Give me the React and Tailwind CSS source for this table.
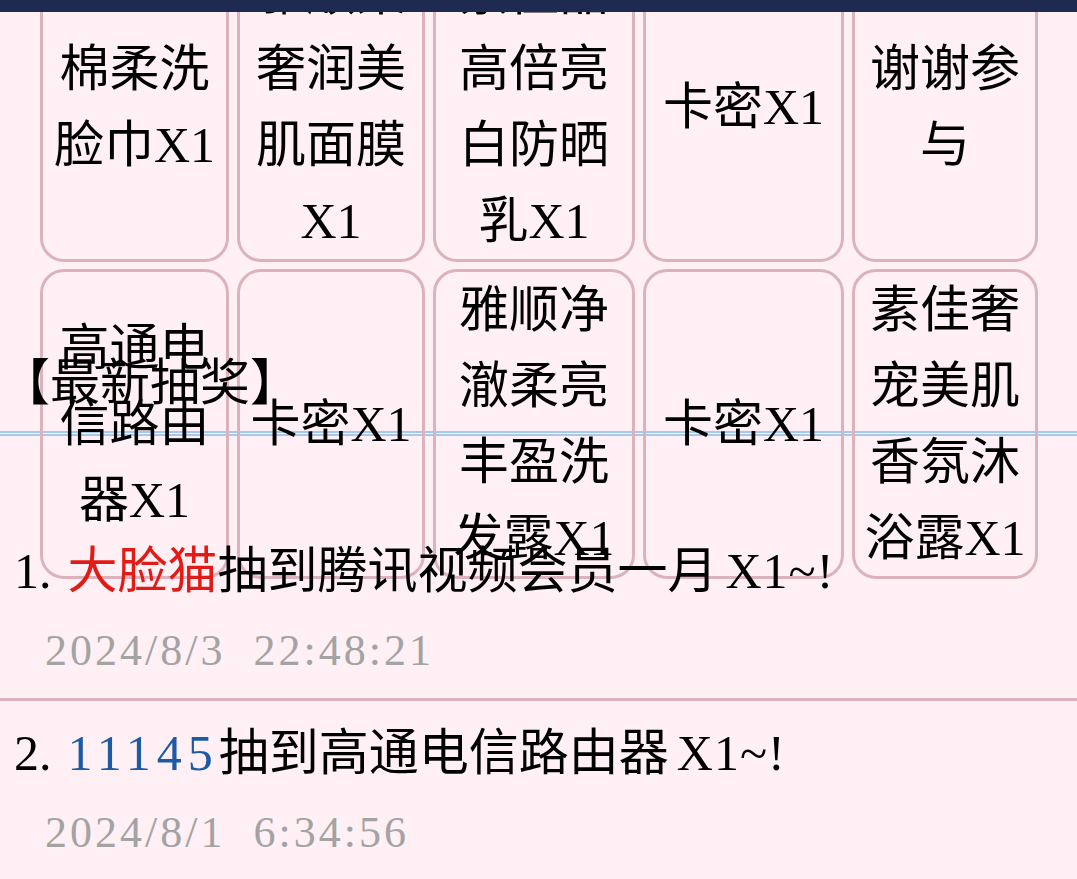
const prizes = [
  '雅顺柔奢润美肌面膜X1',
  '素佳晶高倍亮白防晒乳X1',
  '卡密X1',
  '谢谢参与',
  '高通电信路由器X1',
  '卡密X1',
  '雅顺净澈柔亮丰盈洗发露X1',
  '卡密X1',
  '素佳奢宠美肌香氛沐浴露X1',
];

const records = [
  { no: 1, name: '大脸猫', color: 'text-[#e31b17]', prize: '腾讯视频会员一月', time: '2024/8/3\u00a0\u00a022:48:21' },
  { no: 2, name: '11145', color: 'text-[#1d5aa5] tracking-[6px]', prize: '高通电信路由器', time: '2024/8/1\u00a0\u00a06:34:56' },
];

function PrizeCard({ text }) {
  return (
    <div className="flex items-center justify-center rounded-[24px] border-[3px] border-[#dcb2bd] text-center">
      <span className="block">{text}</span>
    </div>
  );
}

export default function App() {
  const cards = ['棉柔洗脸巾X1', ...prizes];

  return (
    <div className="relative min-h-screen overflow-hidden bg-[#fff0f5] font-['Liberation_Serif','Noto_Sans_CJK_SC',serif] text-[50px] leading-[76px] text-black">
      {/* 顶部导航条，盖在内容上 */}
      <div className="fixed inset-x-0 top-0 z-10 h-[12px] bg-[#1e2a50]" />

      {/* 奖品格子 — 外层高度固定，格子溢出 */}
      <div className="-mt-[48px] h-[393px]">
        <div className="ml-[40px] grid grid-cols-[189px_188px_202px_201px_186px] gap-x-[8px] gap-y-[7px]">
          {cards.map((t, i) => (
            <PrizeCard key={i} text={t} />
          ))}
        </div>
      </div>

      {/* 最新抽奖 */}
      <div className="border-b-[5px] border-double border-[#a6c8ea] pb-[10px]">
        <h2 className="font-normal">【最新抽奖】</h2>
      </div>

      <ul className="mt-[83px]">
        {records.map((r) => (
          <li key={r.no} className="border-b-[3px] border-[#dcb2bd] pb-[17px] pt-[14px] last:border-b-0">
            <p className="pl-[14px]">
              {r.no}.<span className={`ml-[16px] ${r.color}`}>{r.name}</span>抽到{r.prize}
              <span className="ml-[8px] tracking-[1px]">X1~!</span>
            </p>
            <p className="mt-[12px] pl-[45px] text-[44px] leading-[60px] tracking-[3px] text-[#a3a3a3]">{r.time}</p>
          </li>
        ))}
      </ul>
    </div>
  );
}
